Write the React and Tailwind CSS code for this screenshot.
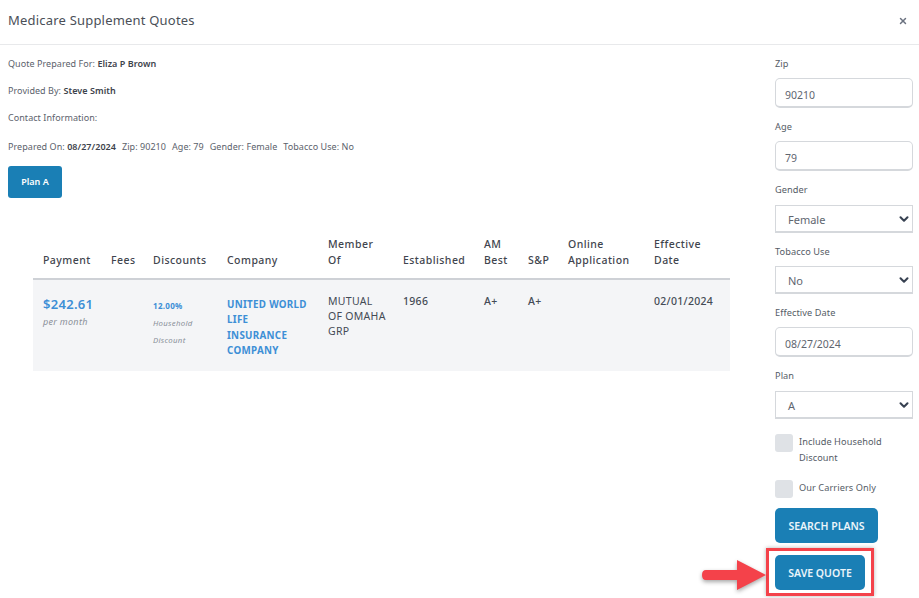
import { ChevronDown, X } from 'lucide-react';

const labelClass = 'block h-[16px] text-[9.2px] leading-[16px] tracking-[0.08px] text-[#555c66]';

const Field = ({ label, value }) => (
    <div>
        <label className={labelClass}>{label}</label>
        <div className="mt-[6px] flex h-[30px] w-[138px] items-center rounded-[5px] border border-[#d5d8dc] border-b-2 pl-[9px] pt-[6px] text-[10.5px] text-[#5f6670]">
            {value}
        </div>
    </div>
);

const SelectField = ({ label, value, tight }) => (
    <div>
        <label className={labelClass}>{label}</label>
        <div className={`${tight ? 'mt-[6px]' : 'mt-[7px]'} flex h-[28px] w-[138px] items-center justify-between border border-[#d5d8dc] border-b-2 pl-[12px] pr-[1px] text-[11px] text-[#5f6670]`}>
            <span className="pt-[4px]">{value}</span>
            <ChevronDown size={14} strokeWidth={3.5} className="text-[#374151]" />
        </div>
    </div>
);

const Check = ({ label }) => (
    <div className="flex items-start gap-[6px]">
        <span className="h-[18px] w-[18px] shrink-0 rounded-[3px] bg-[#dfe2e6]" />
        <span className="w-[100px] text-[9.2px] leading-[16px] tracking-[0.08px] text-[#555c66]">{label}</span>
    </div>
);

const headers = ['Payment', 'Fees', 'Discounts', 'Company', 'Member Of', 'Established', 'AM Best', 'S&P', 'Online Application', 'Effective Date'];
const widths = ['w-[68px]', 'w-[42px]', 'w-[74px]', 'w-[101px]', 'w-[75px]', 'w-[81px]', 'w-[44px]', 'w-[40px]', 'w-[86px]', 'w-[86px]'];

export default function App() {
    return (
        <div className="relative h-[598px] w-[919px] overflow-hidden bg-white font-['Noto_Sans',sans-serif] text-[#444b55]">
            {/* Header */}
            <div className="flex h-[45px] items-center justify-between border-b border-[#e8e9eb] pb-[3px] pl-[8px] pr-[11px]">
                <h2 className="text-[13px] tracking-[0.2px] text-[#4a4f57]">Medicare Supplement Quotes</h2>
                <X size={10} strokeWidth={3.5} className="text-[#6b7280]" />
            </div>

            <div className="flex">
                {/* Quote */}
                <div className="w-[775px] shrink-0 pl-[8px]">
                    <div className="pt-[12px] text-[9px] leading-[14px] tracking-[0.05px] text-[#5b626c]">
                        <p>Quote Prepared For: <b className="font-semibold text-[#3d434c]">Eliza P Brown</b></p>
                        <p className="mt-[13px]">Provided By: <b className="font-semibold text-[#3d434c]">Steve Smith</b></p>
                        <p className="mt-[13px]">Contact Information:</p>
                        <p className="mt-[15px] flex gap-[6px]">
                            <span>Prepared On: <b className="font-semibold text-[#3d434c]">08/27/2024</b></span>
                            <span>Zip: 90210</span>
                            <span>Age: 79</span>
                            <span>Gender: Female</span>
                            <span>Tobacco Use: No</span>
                        </p>
                    </div>
                    <button className="mt-[12px] h-[32px] w-[54px] rounded-[3px] bg-[#1a7fb5] text-[9px] font-semibold text-white">Plan A</button>

                    <table className="ml-[25px] mt-[38px] w-[697px] table-fixed border-collapse">
                        <colgroup>
                            {widths.map((w, i) => <col key={i} className={w} />)}
                        </colgroup>
                        <thead>
                            <tr className="border-b-2 border-[#ced1d6]">
                                {headers.map((h) => (
                                    <th key={h} className="pb-[10px] pl-[10px] pr-[6px] pt-0 text-left align-bottom text-[10.5px] font-medium leading-[16px] tracking-[0.45px] text-[#3f454e]">{h}</th>
                                ))}
                            </tr>
                        </thead>
                        <tbody>
                            <tr className="h-[92px] bg-[#f4f5f7] align-top text-[10.5px] tracking-[0.3px] text-[#444b55]">
                                <td className="pl-[10px] pt-[14px]">
                                    <div className="text-[13px] font-semibold leading-[20px] text-[#3d8fd6]">$242.61</div>
                                    <div className="mt-[1px] text-[9px] italic leading-[14px] text-[#8a9099]">per month</div>
                                </td>
                                <td />
                                <td className="pl-[10px] pt-[20px]">
                                    <div className="text-[8px] font-bold leading-[12px] text-[#3d8fd6]">12.00%</div>
                                    <div className="mt-[3px] text-[7.8px] italic leading-[16.5px] text-[#8a9099]">Household Discount</div>
                                </td>
                                <td className="pl-[10px] pr-[8px] pt-[17px] text-[9.8px] font-bold leading-[15.4px] tracking-[0.3px] text-[#3d8fd6]">UNITED WORLD LIFE INSURANCE COMPANY</td>
                                <td className="pl-[10px] pt-[14px] leading-[15px]">MUTUAL<br />OF OMAHA<br />GRP</td>
                                <td className="pl-[10px] pt-[14px] font-medium leading-[15px]">1966</td>
                                <td className="pl-[10px] pt-[14px] font-medium leading-[15px]">A+</td>
                                <td className="pl-[10px] pt-[14px] font-medium leading-[15px]">A+</td>
                                <td />
                                <td className="pl-[10px] pt-[14px] font-medium leading-[15px]">02/01/2024</td>
                            </tr>
                        </tbody>
                    </table>
                </div>

                {/* Search form */}
                <div className="flex flex-col pt-[11px]">
                    <Field label="Zip" value="90210" />
                    <div className="mt-[11px]"><Field label="Age" value="79" /></div>
                    <div className="mt-[11px]"><SelectField label="Gender" value="Female" /></div>
                    <div className="mt-[11px]"><SelectField label="Tobacco Use" value="No" tight /></div>
                    <div className="mt-[11px]"><Field label="Effective Date" value="08/27/2024" /></div>
                    <div className="mt-[11px]"><SelectField label="Plan" value="A" /></div>
                    <div className="mt-[15px]"><Check label="Include Household Discount" /></div>
                    <div className="mt-[14px]"><Check label="Our Carriers Only" /></div>
                    <button className="mt-[10px] h-[35px] w-[103px] rounded-[5px] bg-[#1a7fb5] pt-[2px] text-[10.5px] font-semibold text-[#eaf4fa]">SEARCH PLANS</button>
                    <button className="mt-[12px] h-[35px] w-[90px] rounded-[5px] bg-[#1a7fb5] pt-[2px] text-[10.5px] font-semibold text-[#eaf4fa]">SAVE QUOTE</button>
                </div>
            </div>

            {/* Callout drawn over the screenshot */}
            <div className="absolute left-[766px] top-[548px] h-[48px] w-[108px] border-[3px] border-[#f4424a] shadow-[0_0_4px_rgba(0,0,0,0.3)]" />
            <svg className="absolute left-[698px] top-[555px]" width="70" height="40" viewBox="0 0 70 40">
                <path d="M8 15 H39 V5 L68 20 L39 35 V25 H8 Q4 25 4 20 Q4 15 8 15 Z" fill="#f4424a" style={{ filter: 'drop-shadow(0 2px 2px rgba(0,0,0,0.35))' }} />
            </svg>
        </div>
    );
}
